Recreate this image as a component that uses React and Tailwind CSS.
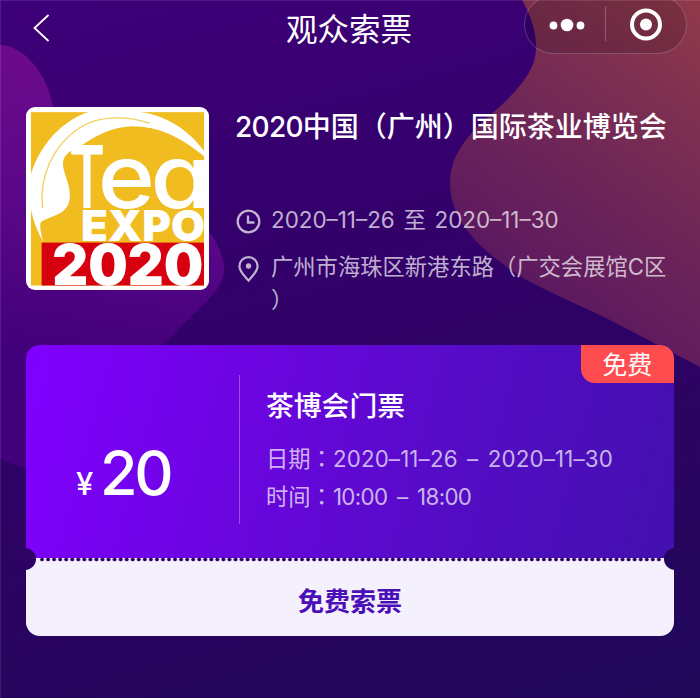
import clsx from 'clsx'

const EXPO = {
  titulo: '2020中国（广州）国际茶业博览会',
  fechas: '2020–11–26 至 2020–11–30',
  direccion: '广州市海珠区新港东路（广交会展馆C区）',
}

const TICKET = {
  nombre: '茶博会门票',
  precio: '20',
  etiqueta: '免费',
  detalles: [
    { label: '日期', value: '2020–11–26 – 2020–11–30', spacing: 'tracking-[0.15px] [word-spacing:3px]' },
    { label: '时间', value: '10:00 – 18:00', spacing: 'tracking-[-0.65px] [word-spacing:4px]' },
  ],
}

/* ─── Background blobs ─── */
function Background() {
  return (
    <svg className="absolute inset-0" width="700" height="698" viewBox="0 0 700 698" fill="none">
      <defs>
        <linearGradient id="warm" x1="720" y1="0" x2="480" y2="330" gradientUnits="userSpaceOnUse">
          <stop stopColor="#933b49" />
          <stop offset="0.5" stopColor="#6f2757" />
          <stop offset="1" stopColor="#541265" />
        </linearGradient>
        <linearGradient id="plum" x1="60" y1="60" x2="20" y2="350" gradientUnits="userSpaceOnUse">
          <stop stopColor="#6c0a8c" />
          <stop offset="0.5" stopColor="#5b0788" />
          <stop offset="1" stopColor="#42007a" />
        </linearGradient>
      </defs>
      <path d="M522 0C530 14 537 32 536 50C535 68 524 82 507 100C485 121 450 144 450 183C450 225 488 256 525 279C550 293 580 305 610 320L700 367V0Z" fill="url(#warm)" />
      <path d="M0 45C25 46 46 74 52 102C66 165 120 190 180 210C203 218 224 245 224 270C223 284 215 293 204 304L120 386L60 480L26 469L0 459Z" fill="url(#plum)" />
    </svg>
  )
}

function ExpoLogo() {
  return (
    <svg className="size-[183px] shrink-0 overflow-visible rounded-[9px] bg-white" viewBox="33 34 550 549">
      <rect x="48" y="49" width="520" height="521" fill="#f0bc20" />
      <rect x="80" y="441" width="488" height="129" fill="#d7000f" />
      <path d="M85 440C70 410 54 380 46 330L46 245C60 180 120 80 225 47L365 47C450 55 520 100 570 168V183C500 125 435 91 350 91C290 93 240 120 195 153C165 163 143 180 144 205C145 232 165 265 165 300C163 360 110 357 77 380C74 395 78 415 85 440Z" fill="#fff" />
      <path d="M83 338C72 250 110 150 195 95C255 58 335 60 405 82" fill="none" stroke="#f3cf5c" strokeWidth="4" />
      <g fill="#fff" className="font-[Inter]">
        <text x="162" y="337" fontSize="260" fontWeight="600" textLength="108" lengthAdjust="spacingAndGlyphs">T</text>
        <text x="249" y="336" fontSize="266" fontWeight="500" textLength="172" lengthAdjust="spacingAndGlyphs">e</text>
        <text x="407" y="336" fontSize="266" fontWeight="500" textLength="182" lengthAdjust="spacingAndGlyphs" className="[font-feature-settings:'cv11']">a</text>
        <text x="198" y="437" fontSize="129" fontWeight="900" textLength="373" lengthAdjust="spacingAndGlyphs">EXPO</text>
        <text x="112" y="568" fontSize="168" fontWeight="900" textLength="454" lengthAdjust="spacingAndGlyphs">2020</text>
      </g>
    </svg>
  )
}

function Header() {
  return (
    <header className="relative flex h-[58px] items-center justify-center">
      <svg className="absolute top-3 left-8" width="20" height="32" viewBox="0 0 20 32" fill="none">
        <path d="M16.5 3L2.5 16L16.5 29" stroke="#fff" strokeWidth="1.8" />
      </svg>
      <h1 className="mt-px mr-[2px] text-[31.5px] leading-[58px]">观众索票</h1>

      {/* Mini program capsule */}
      <div className="absolute -top-[5px] right-[13px] flex h-[59px] w-[163px] items-center rounded-full border border-white/20 bg-black/15">
        <svg width="161" height="57" viewBox="0 0 161 57" fill="#fff">
          <circle cx="28.5" cy="29.5" r="3.9" />
          <circle cx="42" cy="29" r="6.3" />
          <circle cx="55.5" cy="29.5" r="3.9" />
          <path d="M80.5 10.5V45" stroke="#fff" strokeOpacity="0.25" />
          <circle cx="121" cy="28.5" r="14" fill="none" stroke="#fff" strokeWidth="4" />
          <circle cx="121" cy="28.5" r="6" />
        </svg>
      </div>
    </header>
  )
}

function ExpoInfo() {
  return (
    <section className="mt-[49px] flex h-[238px] pl-[26px]">
      <ExpoLogo />
      <div className="ml-[26px] w-[440px]">
        <h2 className="text-[28px] leading-[40px] font-medium whitespace-nowrap">
          <span className="tracking-[-0.7px]">2020</span>{EXPO.titulo.slice(4)}
        </h2>
        <div className="mt-[56px] flex text-[22.4px] leading-[33px] text-white/70">
          <svg className="mt-[6px] mr-[10px] ml-px shrink-0" width="25" height="25" viewBox="0 0 25 25" fill="none" stroke="currentColor" strokeWidth="2.3">
            <circle cx="12.5" cy="12.5" r="10.8" />
            <path d="M12 6.5V13.5H18.5" />
          </svg>
          <p className="whitespace-nowrap [word-spacing:2.4px]">{EXPO.fechas}</p>
        </div>
        <div className="mt-[14px] flex text-[22.3px] leading-[33px] text-white/70">
          <svg className="mt-[5px] mr-[10px] ml-px shrink-0" width="25" height="28" viewBox="0 0 25 28" fill="none" stroke="currentColor" strokeWidth="2.2">
            <path d="M12.5 25.5C9 21.5 3.4 16.5 3.4 11.2A9.1 9.1 0 0 1 21.6 11.2C21.6 16.5 16 21.5 12.5 25.5Z" />
            <circle cx="12.5" cy="11" r="2.7" fill="currentColor" stroke="none" />
          </svg>
          <p className="w-[400px] [line-break:anywhere]">{EXPO.direccion}</p>
        </div>
      </div>
    </section>
  )
}

function Notch({ className }) {
  return <span className={clsx('absolute top-[203px] size-[22px] rounded-full', className)} />
}

function Ticket() {
  return (
    <section className="relative mx-[26px] h-[291px] overflow-hidden rounded-[14px]">
      <div className="flex h-[213px] bg-[linear-gradient(105deg,#8000ff_2%,#6b05e0_34%,#540cc5_66%,#4310ae_100%)]">
        <div className="flex w-[213px] items-baseline pt-[92px] pl-[50px]">
          <span className="w-[24px] text-[31px] leading-none font-medium">¥</span>
          <span className="text-[61px] leading-[72px] font-medium tracking-[-3.4px]">{TICKET.precio}</span>
        </div>
        <div className="mt-[30px] h-[149px] w-px bg-[#9a4bf5]" />
        <div className="pt-[41px] pl-[26px]">
          <h3 className="text-[27.8px] leading-[40px] font-medium">{TICKET.nombre}</h3>
          <div className="mt-[13px] text-[22.3px] leading-[37px] text-white/70">
            {TICKET.detalles.map(d => (
              <p key={d.label} className="whitespace-nowrap">
                {d.label}
                <span className="font-['Noto_Sans_CJK_TC',sans-serif]">：</span>
                <span className={d.spacing}>{d.value}</span>
              </p>
            ))}
          </div>
        </div>
      </div>

      <button className="flex h-[78px] w-full items-center justify-center bg-[#f4f1fc] pt-[8px] text-[26px] font-bold text-[#4b0fb9]">
        免费索票
      </button>

      {/* Tear line */}
      <div className="absolute top-[212px] right-[12px] left-[13px] h-[5px] bg-[radial-gradient(circle,#2d0262_1.6px,transparent_2.2px)] bg-[length:6.05px_5px]" />
      <Notch className="-left-[12px] bg-[#2e0264]" />
      <Notch className="-right-[12px] bg-[#24055b]" />

      <div className="absolute top-0 right-0 flex h-[37.5px] w-[93.5px] items-center justify-center rounded-bl-[14px] bg-[#ff4d4f] pt-[3px] text-[25px] leading-none">
        {TICKET.etiqueta}
      </div>
    </section>
  )
}

export default function App() {
  return (
    <div className="relative h-[698px] w-[700px] overflow-hidden bg-[linear-gradient(165deg,#3e0079_0%,#35006d_30%,#2d0263_60%,#200859_100%)] font-[Inter,'Noto_Sans_CJK_SC',sans-serif] text-white">
      <Background />
      <main className="relative">
        <Header />
        <ExpoInfo />
        <Ticket />
      </main>
      <div className="pointer-events-none absolute inset-0 border-t border-l border-white/10" />
    </div>
  )
}
